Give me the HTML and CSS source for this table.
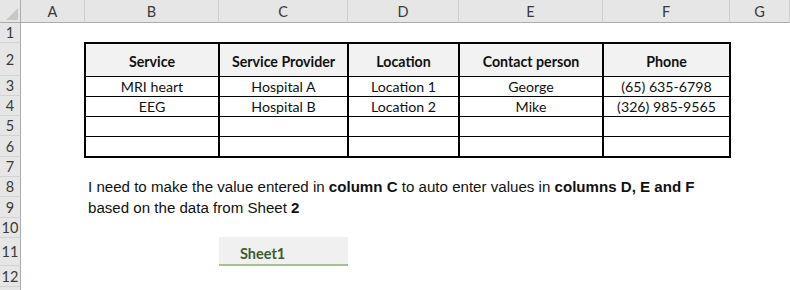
FILE: index.html
```html
<!DOCTYPE html>
<html>
<head>
<meta charset="utf-8">
<link rel="stylesheet" href="styles.css">
</head>
<body>
<div class="sheet">
  <div class="corner"><svg class="corner-tri" width="12" height="12" viewBox="0 0 12 12"><polygon points="12,0 12,12 0,12" fill="#c8c8c8"/></svg></div>
  <div class="colhead">A</div>
  <div class="colhead">B</div>
  <div class="colhead">C</div>
  <div class="colhead">D</div>
  <div class="colhead">E</div>
  <div class="colhead">F</div>
  <div class="colhead">G</div>

  <div class="rowhead">1</div>
  <div class="rowhead">2</div>
  <div class="rowhead">3</div>
  <div class="rowhead">4</div>
  <div class="rowhead">5</div>
  <div class="rowhead">6</div>
  <div class="rowhead">7</div>
  <div class="rowhead">8</div>
  <div class="rowhead">9</div>
  <div class="rowhead">10</div>
  <div class="rowhead">11</div>
  <div class="rowhead">12</div>
  <div class="rowhead"></div>

  <div class="data">
    <div class="cell head">Service</div>
    <div class="cell head">Service Provider</div>
    <div class="cell head">Location</div>
    <div class="cell head">Contact person</div>
    <div class="cell head last">Phone</div>

    <div class="cell">MRI heart</div>
    <div class="cell">Hospital A</div>
    <div class="cell">Location 1</div>
    <div class="cell">George</div>
    <div class="cell last">(65) 635-6798</div>

    <div class="cell">EEG</div>
    <div class="cell">Hospital B</div>
    <div class="cell">Location 2</div>
    <div class="cell">Mike</div>
    <div class="cell last">(326) 985-9565</div>

    <div class="cell"></div>
    <div class="cell"></div>
    <div class="cell"></div>
    <div class="cell"></div>
    <div class="cell last"></div>

    <div class="cell bottom"></div>
    <div class="cell bottom"></div>
    <div class="cell bottom"></div>
    <div class="cell bottom"></div>
    <div class="cell bottom last"></div>
  </div>

  <div class="note note-1">I need to make the value entered in <b>column C</b> to auto enter values in <b>columns D, E and F</b></div>
  <div class="note note-2">based on the data from Sheet <b>2</b></div>

  <div class="tab">Sheet1</div>
</div>
</body>
</html>
```

FILE: styles.css
```css
html, body {
  margin: 0;
  padding: 0;
  background: #ffffff;
}

body {
  font-family: Lato, "Liberation Sans", sans-serif;
  width: 790px;
  height: 290px;
  overflow: hidden;
}

.sheet {
  display: grid;
  grid-template-columns: 21px 64px 134px 129px 111px 144px 127px 60px;
  grid-template-rows: 23px 20px 33px 20px 20px 20px 21px 20px 20px 21px 20px 28px 21px 20px;
  width: 790px;
  height: 290px;
  overflow: hidden;
}

.corner {
  background: #e6e6e6;
  border-right: 1px solid #ababab;
  border-bottom: 1px solid #ababab;
  box-sizing: border-box;
  display: flex;
  align-items: flex-end;
  justify-content: flex-end;
  padding: 0 2px 2px 0;
}

.colhead {
  background: #e6e6e6;
  border-right: 1px solid #cfcfcf;
  border-bottom: 1px solid #ababab;
  box-sizing: border-box;
  display: flex;
  align-items: center;
  justify-content: center;
  font-size: 14.5px;
  color: #3a3a3a;
}

.rowhead {
  grid-column: 1;
  background: #e6e6e6;
  border-right: 1px solid #ababab;
  border-bottom: 1px solid #d2d2d2;
  box-sizing: border-box;
  display: flex;
  align-items: center;
  justify-content: center;
  font-size: 14.5px;
  color: #3a3a3a;
}

.data {
  grid-column: 3 / 8;
  grid-row: 3 / 8;
  margin: -1px;
  border: 2px solid #000;
  display: grid;
  grid-template-columns: 134px 129px 111px 144px 1fr;
  grid-template-rows: 33px 20px 20px 20px 1fr;
}

.cell {
  box-sizing: border-box;
  border-right: 2px solid #000;
  border-bottom: 1px solid #000;
  display: flex;
  align-items: center;
  justify-content: center;
  font-size: 14.2px;
  color: #111;
  white-space: nowrap;
}

.cell.last {
  border-right: none;
}

.cell.bottom {
  border-bottom: none;
}

.cell.head {
  background: #f2f2f2;
  font-weight: bold;
  padding-top: 2px;
}

.note {
  grid-column: 3 / -1;
  white-space: nowrap;
  font-family: "Liberation Sans", Arial, sans-serif;
  font-size: 15.1px;
  color: #111;
  padding-left: 3px;
}

.note-1 {
  grid-row: 9;
  padding-top: 1px;
}

.note-2 {
  grid-row: 10;
  padding-top: 2px;
}

.tab {
  grid-column: 4;
  grid-row: 12;
  margin-top: -1px;
  background: #f0f0f0;
  border-bottom: 2px solid #a6bf93;
  box-sizing: border-box;
  font-weight: bold;
  font-size: 14.5px;
  color: #3d5c2e;
  padding-left: 21px;
  padding-bottom: 2px;
  display: flex;
  align-items: flex-end;
}
```
